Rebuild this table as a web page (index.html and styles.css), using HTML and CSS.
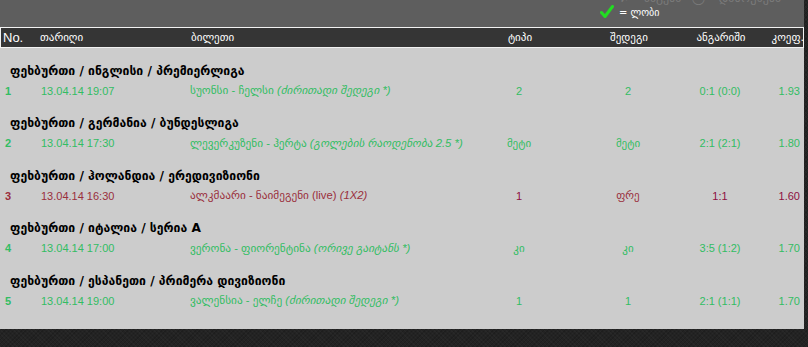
FILE: index.html
```html
<!DOCTYPE html>
<html lang="ka">
<head>
<meta charset="utf-8">
<link rel="stylesheet" href="styles.css">
</head>
<body>
<div class="page">
  <div class="top">
    <div class="legend">
      <div class="legend-faint">✗ = წაგება &nbsp; ◯ = დაბრუნება</div>
      <div class="legend-item">
        <svg class="check" width="14" height="14" viewBox="0 0 14 14"><path d="M1.5 7.5 L5 11.5 L12.5 1.5" fill="none" stroke="#22dd22" stroke-width="3" stroke-linecap="round" stroke-linejoin="round"/></svg>
        <span>= ლობი</span>
      </div>
    </div>
  </div>
  <div class="grid head">
    <div class="c-no">No.</div>
    <div class="c-date">თარიღი</div>
    <div class="c-ticket">ბილეთი</div>
    <div class="c-mid">ტიპი</div>
    <div class="c-mid">შედეგი</div>
    <div class="c-mid">ანგარიში</div>
    <div class="c-coef">კოეფ.</div>
  </div>
  <div class="body">
    <div class="group">
      <div class="gtitle">ფეხბურთი / ინგლისი / პრემიერლიგა</div>
      <div class="grid row win">
        <div class="c-no">1</div>
        <div class="c-date">13.04.14 19:07</div>
        <div class="c-ticket">სუონსი - ჩელსი <i>(ძირითადი შედეგი *)</i></div>
        <div class="c-mid">2</div>
        <div class="c-mid">2</div>
        <div class="c-mid">0:1 (0:0)</div>
        <div class="c-coef">1.93</div>
      </div>
    </div>
    <div class="group">
      <div class="gtitle">ფეხბურთი / გერმანია / ბუნდესლიგა</div>
      <div class="grid row win">
        <div class="c-no">2</div>
        <div class="c-date">13.04.14 17:30</div>
        <div class="c-ticket">ლევერკუზენი - ჰერტა <i>(გოლების რაოდენობა 2.5 *)</i></div>
        <div class="c-mid">მეტი</div>
        <div class="c-mid">მეტი</div>
        <div class="c-mid">2:1 (2:1)</div>
        <div class="c-coef">1.80</div>
      </div>
    </div>
    <div class="group">
      <div class="gtitle">ფეხბურთი / ჰოლანდია / ერედივიზიონი</div>
      <div class="grid row loss">
        <div class="c-no">3</div>
        <div class="c-date">13.04.14 16:30</div>
        <div class="c-ticket">ალკმაარი - ნაიმეგენი (live) <i>(1X2)</i></div>
        <div class="c-mid dark">1</div>
        <div class="c-mid">ფრე</div>
        <div class="c-mid dark">1:1</div>
        <div class="c-coef dark">1.60</div>
      </div>
    </div>
    <div class="group">
      <div class="gtitle">ფეხბურთი / იტალია / სერია A</div>
      <div class="grid row win">
        <div class="c-no">4</div>
        <div class="c-date">13.04.14 17:00</div>
        <div class="c-ticket">ვერონა - ფიორენტინა <i>(ორივე გაიტანს *)</i></div>
        <div class="c-mid">კი</div>
        <div class="c-mid">კი</div>
        <div class="c-mid">3:5 (1:2)</div>
        <div class="c-coef">1.70</div>
      </div>
    </div>
    <div class="group">
      <div class="gtitle">ფეხბურთი / ესპანეთი / პრიმერა დივიზიონი</div>
      <div class="grid row win">
        <div class="c-no">5</div>
        <div class="c-date">13.04.14 19:00</div>
        <div class="c-ticket">ვალენსია - ელჩე <i>(ძირითადი შედეგი *)</i></div>
        <div class="c-mid">1</div>
        <div class="c-mid">1</div>
        <div class="c-mid">2:1 (1:1)</div>
        <div class="c-coef">1.70</div>
      </div>
    </div>
  </div>
</div>
</body>
</html>
```

FILE: styles.css
```css
html, body {
  margin: 0;
  padding: 0;
}
body {
  background-color: #232323;
  background-image:
    repeating-linear-gradient(45deg, rgba(255,255,255,0.025) 0 1px, transparent 1px 3px),
    repeating-linear-gradient(-45deg, rgba(0,0,0,0.15) 0 1px, transparent 1px 3px);
  font-family: "Liberation Sans", "DejaVu Sans", Arial, sans-serif;
  height: 347px;
  overflow: hidden;
}
.page {
  width: 804px;
}
.top {
  height: 27px;
  background: #5e5e5e;
  overflow: hidden;
}
.legend {
  margin-left: 600px;
  margin-top: -9px;
}
.legend-faint {
  height: 14px;
  font-size: 12px;
  line-height: 14px;
  color: #7a7a7a;
  padding-left: 20px;
  white-space: nowrap;
}
.legend-item {
  display: flex;
  align-items: center;
  gap: 5px;
  height: 14px;
  color: #ffffff;
  font-size: 10px;
  font-family: "DejaVu Sans", sans-serif;
}
.check {
  display: block;
}
.grid {
  display: grid;
  grid-template-columns: 36px 150px 284px 98px 120px 64px 52px;
  align-items: center;
}
.head {
  box-sizing: border-box;
  height: 21px;
  background: #353535;
  border: 1px solid #f2f2f2;
  color: #ffffff;
  font-size: 11px;
  font-family: "DejaVu Sans", sans-serif;
}
.head .c-no {
  font-family: "Liberation Sans", sans-serif;
  font-size: 13px;
  padding-left: 2px;
}
.head .c-date {
  padding-left: 3px;
}
.head .c-coef {
  padding-right: 1px;
}
.c-no {
  padding-left: 5px;
}
.c-date {
  padding-left: 5px;
}
.c-ticket {
  padding-left: 4px;
  white-space: nowrap;
}
.c-mid {
  text-align: center;
}
.c-coef {
  text-align: right;
  padding-right: 4px;
}
.body {
  background: #cccccc;
  padding-bottom: 18px;
}
.group {
  padding-top: 12.5px;
}
.gtitle {
  height: 20px;
  line-height: 20px;
  padding-left: 10px;
  font-family: "DejaVu Sans", sans-serif;
  font-weight: bold;
  font-size: 12.2px;
  color: #000000;
}
.row {
  height: 20px;
  font-size: 11px;
}
.row .c-ticket {
  font-size: 11.3px;
}
.row .c-no {
  font-weight: bold;
  font-size: 11px;
}
.win {
  color: #32bd63;
}
.loss {
  color: #9a2f3c;
}
.loss .dark {
  color: #8c0f42;
}
i {
  font-style: italic;
}
```
